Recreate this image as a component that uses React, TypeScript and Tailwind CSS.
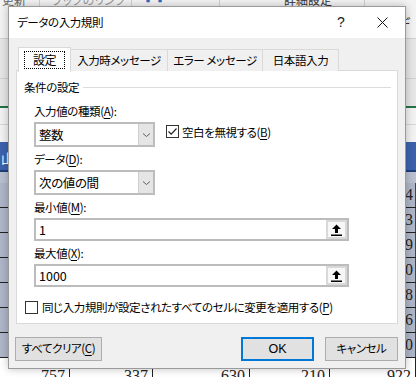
import React from 'react';

const jp = "font-['Noto_Sans_CJK_JP','Noto_Sans',sans-serif] [font-feature-settings:'palt']";

const rows = [
  ['', '', '', '', '4'],
  ['', '', '', '', '3'],
  ['', '', '', '', '9'],
  ['', '', '', '', '0'],
  ['', '', '', '', '8'],
  ['', '', '', '', '6'],
  ['', '', '', '', '0'],
];

const Chevron = () => (
  <svg width="9" height="6" viewBox="0 0 9 6" fill="none">
    <path d="M1 1.5 L4.5 4.5 L8 1.5" stroke="#606060" strokeWidth="1" />
  </svg>
);

const RangeIcon = () => (
  <svg width="11" height="12" viewBox="0 0 11 12">
    <path d="M5.5 0.5 L10 5 L7 5 L7 9 L4 9 L4 5 L1 5 Z" fill="#000" />
    <rect x="0" y="10.5" width="11" height="1.5" fill="#000" />
  </svg>
);

const CheckBox: React.FC<{ checked?: boolean }> = ({ checked }) => (
  <div className="w-[13px] h-[13px] border border-[#333] bg-white flex items-center justify-center shrink-0">
    {checked && (
      <svg width="11" height="11" viewBox="0 0 11 11" fill="none">
        <path d="M1.5 5.5 L4.2 8.2 L9.5 2.5" stroke="#222" strokeWidth="1.2" />
      </svg>
    )}
  </div>
);

const U: React.FC<{ c: string }> = ({ c }) => <span className="underline underline-offset-[2px]">{c}</span>;

const Select: React.FC<{ value: string }> = ({ value }) => (
  <div className="w-[121px] h-[25px] border-2 border-[#bcbcbc] bg-white flex">
    <div className="flex-1 flex items-center pl-[3px] text-[12.5px]">{value}</div>
    <div className="w-[15px] bg-[#e5e5e5] border-l border-[#cfcfcf] flex items-center justify-center">
      <Chevron />
    </div>
  </div>
);

const RangeInput: React.FC<{ value: string }> = ({ value }) => (
  <div className="w-[315px] h-[23px] border-2 border-[#bcbcbc] bg-white flex">
    <div className="flex-1 flex items-center pl-[3px] text-[12.5px] tracking-normal">{value}</div>
    <div className="w-[21px] bg-[#d9d9d9] p-[2px]">
      <div className="w-full h-full bg-[#f7f7f7] flex items-center justify-center">
        <RangeIcon />
      </div>
    </div>
  </div>
);

const Tab: React.FC<{ label: string; w: string }> = ({ label, w }) => (
  <div className={`${w} h-[22px] mt-[2px] bg-[#f0f0f0] border border-b-0 border-[#d9d9d9] -ml-px flex items-center justify-center`}>
    {label}
  </div>
);

export default function App() {
  return (
    <div className={`relative w-[416px] h-[377px] overflow-hidden bg-[#f3f3f3] text-black ${jp}`}>
      {/* excel behind */}
      <div className="h-[38px] bg-[#f3f3f3] relative flex text-[12px] text-[#666] leading-none">
        <div className="w-[40px] border-r border-[#d2d2d2] h-[8px] pl-[2px] overflow-hidden"><div className="-mt-[6px]">更新 ∨</div></div>
        <div className="w-[92px] border-r border-[#d2d2d2] h-[8px] pl-[12px] overflow-hidden text-[#999]"><div className="-mt-[6px]">ブックのリンク</div></div>
        <div className="w-[88px] border-r border-[#d2d2d2] h-[8px] pl-[10px] overflow-hidden text-[#2b68c4]"><div className="-mt-[5px]">▪▪</div></div>
        <div className="w-[145px] border-r border-[#d2d2d2] h-[8px] pl-[64px] overflow-hidden text-[#333]"><div className="-mt-[6px]">詳細設定</div></div>
        <div className="flex-1 pt-[16px] pl-[32px] text-[#333] text-[14px]">デ</div>
      </div>
      <div className="h-[68px] bg-[#e6e6e6] border-t border-[#d0d0d0] flex flex-col">
        <div className="h-[40px] border-b border-[#cfcfcf]" />
      </div>
      <div className="h-[2px] bg-[#217346]" />
      <div className="h-[34px] bg-[#f2f2f2] flex flex-col">
        <div className="h-[17px] border-b border-[#d6d6d6]" />
      </div>
      <div className="h-[30px] bg-[#3c62ad] border-b-2 border-[#1e3d7a] text-white text-[13px] pl-[1px] pt-[6px]">山</div>
      <div className="h-[11px] bg-[#b9c0d0]" />
      {rows.map((r, i) => (
        <div key={i} className="h-[25px] grid grid-cols-[70px_83px_97px_80px_1fr] bg-[#aeb6c8] border-b border-[#222] font-['Liberation_Serif',serif] text-[16px] text-[#222]">
          {r.map((c, j) => (
            <div key={j} className="border-r border-[#444] flex items-center justify-end pr-[2px] leading-none">{c}</div>
          ))}
        </div>
      ))}
      <div className="h-[25px] grid grid-cols-[70px_83px_97px_80px_1fr] bg-white font-['Liberation_Serif',serif] text-[16px] text-[#222]">
        {['757', '337', '630', '210', '922'].map((c, j) => (
          <div key={j} className="border-r border-[#222] flex justify-end pr-[4px] pt-[10px] leading-none">{c}</div>
        ))}
      </div>

      {/* dialog */}
      <div className="absolute left-[8px] top-[6px] w-[398px] h-[363px] border border-[#9a9a9a] bg-[#f0f0f0] shadow-[0_0_8px_rgba(0,0,0,0.25)] flex flex-col text-[11.5px] tracking-[-0.4px]">
        <div className="h-[31px] bg-white flex items-center pl-[8px] shrink-0">
          <span className="flex-1">データの入力規則</span>
          <span className="w-[30px] text-[14px] text-[#222] font-['Liberation_Sans',sans-serif]">?</span>
          <div className="w-[30px] mr-[8px] flex items-center justify-center">
            <svg width="11" height="11" viewBox="0 0 11 11">
              <path d="M0.5 0.5 L10.5 10.5 M10.5 0.5 L0.5 10.5" stroke="#111" strokeWidth="1" />
            </svg>
          </div>
        </div>

        <div className="flex-1 flex flex-col px-[7px] pt-[9px]">
          {/* tabs */}
          <div className="flex h-[24px] pl-[2px] relative z-10">
            <div className="w-[53px] h-[25px] bg-white border border-b-0 border-[#d9d9d9] flex items-center justify-center">
              <div className="px-[8px] h-[18px] border border-dotted border-black flex items-center text-[12px]">設定</div>
            </div>
            <Tab label="入力時メッセージ" w="w-[98px]" />
            <Tab label="エラー メッセージ" w="w-[96px]" />
            <Tab label="日本語入力" w="w-[77px]" />
          </div>

          {/* panel */}
          <div className="h-[254px] bg-white border border-[#d9d9d9] -mt-px flex flex-col pl-[7px] pt-[8px] leading-[16px]">
            <div className="flex items-center">
              <span>条件の設定</span>
              <div className="flex-1 h-px bg-[#dcdcdc] ml-[4px] mr-[6px]" />
            </div>
            <div className="pl-[10px] flex flex-col">
              <div className="mt-[8px]">入力値の種類(<U c="A" />):</div>
              <div className="mt-[3px] flex items-center">
                <Select value="整数" />
                <div className="ml-[11px] -mt-[6px] flex items-center gap-[3px]">
                  <CheckBox checked />
                  <span>空白を無視する(<U c="B" />)</span>
                </div>
              </div>
              <div className="mt-[4px]">データ(<U c="D" />):</div>
              <div className="mt-[3px]"><Select value="次の値の間" /></div>
              <div className="mt-[4px]">最小値(<U c="M" />):</div>
              <div className="mt-[3px]"><RangeInput value="1" /></div>
              <div className="mt-[4px]">最大値(<U c="X" />):</div>
              <div className="mt-[3px]"><RangeInput value="1000" /></div>
            </div>
            <div className="mt-[12px] pl-[1px] flex items-center gap-[4px]">
              <CheckBox />
              <span>同じ入力規則が設定されたすべてのセルに変更を適用する(<U c="P" />)</span>
            </div>
          </div>

          {/* buttons */}
          <div className="mt-[13px] flex">
            <button className="w-[87px] h-[24px] bg-[#e1e1e1] border border-[#adadad] -ml-px">すべてクリア(<U c="C" />)</button>
            <div className="flex-1" />
            <button className="w-[73px] h-[24px] bg-[#e1e1e1] border-2 border-[#0078d7] font-['Liberation_Sans',sans-serif] text-[12.5px] tracking-normal">OK</button>
            <button className="w-[73px] h-[24px] ml-[11px] bg-[#e1e1e1] border border-[#adadad]">キャンセル</button>
          </div>
        </div>
      </div>
    </div>
  );
}
